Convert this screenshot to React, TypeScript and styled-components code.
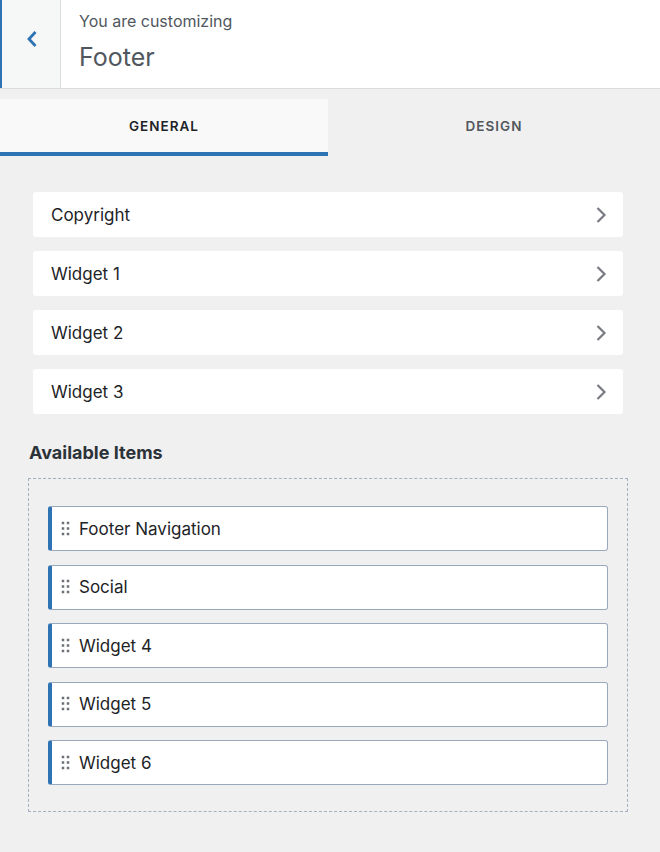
import React from "react";
import styled, { createGlobalStyle } from "styled-components";

const Global = createGlobalStyle`
  html, body { margin: 0; padding: 0; background: #f0f0f1; }
  body { font-family: Inter, "Noto Sans", "Liberation Sans", sans-serif; -webkit-font-smoothing: antialiased; }
  * { box-sizing: border-box; }
`;

const Page = styled.div`
  width: 660px;
  min-height: 852px;
  background: #f0f0f1;
  display: flex;
  flex-direction: column;
`;

const Header = styled.div`
  height: 89px;
  display: flex;
  background: #fff;
  border-bottom: 1px solid #dcdcde;
`;

const BackButton = styled.button`
  width: 61px;
  height: 88px;
  border: none;
  border-left: 2px solid #2e73b3;
  border-right: 1px solid #dcdcde;
  background: #f6f7f7;
  display: flex;
  align-items: flex-start;
  justify-content: center;
  padding: 29px 0 0 2px;
  cursor: pointer;
`;

const Titles = styled.div`
  padding: 10px 0 0 18px;
  display: flex;
  flex-direction: column;
`;

const Sub = styled.div`
  font-size: 16px;
  color: #50575e;
  line-height: 22px;
`;

const Title = styled.div`
  font-size: 25px;
  color: #50575e;
  line-height: 32px;
  margin-top: 9px;
`;

const Tabs = styled.div`
  margin-top: 10px;
  display: flex;
  border-bottom: 1px solid #dcdcde;
`;

const Tab = styled.div<{ $active?: boolean }>`
  flex: 0 0 ${(p) => (p.$active ? "328px" : "332px")};
  height: 57px;
  display: flex;
  align-items: center;
  justify-content: center;
  background: ${(p) => (p.$active ? "#f9f9f9" : "#f0f0f1")};
  border-bottom: 4px solid ${(p) => (p.$active ? "#2e73b3" : "transparent")};
  margin-bottom: -1px;
  font-size: 13.5px;
  font-weight: 600;
  letter-spacing: 1px;
  color: ${(p) => (p.$active ? "#1d2327" : "#50575e")};
`;

const Body = styled.div`
  padding: 36px 37px 40px 33px;
  display: flex;
  flex-direction: column;
`;

const List = styled.div`
  display: flex;
  flex-direction: column;
  gap: 14px;
`;

const Row = styled.div`
  height: 45px;
  background: #fff;
  border-radius: 3px;
  display: flex;
  align-items: center;
  justify-content: space-between;
  padding: 1px 16px 0 18px;
  font-size: 17px;
  color: #1d2327;
`;

const SectionTitle = styled.div`
  margin: 28px 0 0 -4px;
  font-size: 18px;
  font-weight: 700;
  color: #2c3338;
  line-height: 22px;
`;

const Drop = styled.div`
  margin: 14px 0 0 -5px;
  width: 600px;
  border: 1px dashed #a3b0c2;
  padding: 27px 19px 26px 19px;
  display: flex;
  flex-direction: column;
  gap: 13.5px;
`;

const Item = styled.div`
  height: 45px;
  background: #fff;
  border: 1px solid #9aa8bc;
  border-left: 4px solid #2e73b3;
  border-radius: 3px;
  display: flex;
  align-items: center;
  padding-left: 9px;
  gap: 8px;
  font-size: 17px;
  color: #1d2327;
`;

const Chevron = () => (
  <svg width="12" height="18" viewBox="0 0 12 18">
    <path d="M2.5 2 L9.5 9 L2.5 16" fill="none" stroke="#787c82" strokeWidth="2.2" />
  </svg>
);

const Grip = () => (
  <svg width="10" height="16" viewBox="0 0 10 16">
    {[2, 7.5, 13].map((y) =>
      [2, 7].map((x) => <rect key={`${x}-${y}`} x={x - 1.25} y={y - 1.25} width="2.5" height="2.5" fill="#6b7078" />)
    )}
  </svg>
);

export default function App() {
  const rows = ["Copyright", "Widget 1", "Widget 2", "Widget 3"];
  const items = ["Footer Navigation", "Social", "Widget 4", "Widget 5", "Widget 6"];
  return (
    <Page>
      <Global />
      <Header>
        <BackButton aria-label="Back">
          <svg width="12" height="20" viewBox="0 0 12 20">
            <path d="M9.5 3 L3 10 L9.5 17" fill="none" stroke="#2e73b3" strokeWidth="2.8" />
          </svg>
        </BackButton>
        <Titles>
          <Sub>You are customizing</Sub>
          <Title>Footer</Title>
        </Titles>
      </Header>
      <Tabs>
        <Tab $active>GENERAL</Tab>
        <Tab>DESIGN</Tab>
      </Tabs>
      <Body>
        <List>
          {rows.map((r) => (
            <Row key={r}>
              <span>{r}</span>
              <Chevron />
            </Row>
          ))}
        </List>
        <SectionTitle>Available Items</SectionTitle>
        <Drop>
          {items.map((i) => (
            <Item key={i}>
              <Grip />
              <span>{i}</span>
            </Item>
          ))}
        </Drop>
      </Body>
    </Page>
  );
}
